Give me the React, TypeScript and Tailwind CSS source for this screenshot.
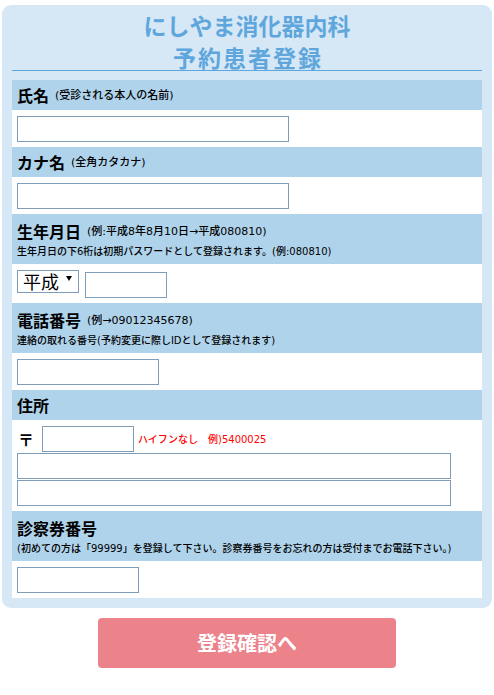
import React from "react";

const font = { fontFamily: '"Noto Sans CJK JP", "Noto Sans", sans-serif' };
const mixed = { fontFamily: '"DejaVu Sans", "Noto Sans CJK JP", sans-serif' };

function Input({ w, className = "" }: { w: string; className?: string }) {
  return (
    <div className={`h-[26px] border border-[#7f9db9] bg-white ${w} ${className}`} />
  );
}

function Note({ text }: { text: string }) {
  return (
    <span className="ml-[6px] text-[11px] leading-[16px] mt-[2px] font-medium text-black" style={mixed}>
      {text}
    </span>
  );
}

function Header1({ label, note }: { label: string; note?: string }) {
  return (
    <div className="h-[30px] bg-[#afd3eb] px-[5px] flex items-center text-black">
      <span className="text-[16px] font-bold leading-[20px]">{label}</span>
      {note && <Note text={note} />}
    </div>
  );
}

function Header2({ label, note, sub }: { label: string; note?: string; sub: string }) {
  return (
    <div className="h-[50px] bg-[#afd3eb] px-[5px] pt-[7px] text-black">
      <div className="flex items-center h-[20px]">
        <span className="text-[16px] font-bold leading-[20px]">{label}</span>
        {note && <Note text={note} />}
      </div>
      <div className="mt-[3px] text-[10px] leading-[16px] whitespace-nowrap font-medium" style={mixed}>
        {sub}
      </div>
    </div>
  );
}

export default function App() {
  return (
    <div className="w-[494px] h-[695px] bg-white" style={font}>
      <div className="mx-[2px] mt-[5px] w-[490px] bg-[#d6e8f6] rounded-[9px] px-[10px] pb-[10px]">
        <div className="h-[66px] pt-[4px] border-b border-[#5ea6dc] text-center text-[#5ea6dc] text-[23px] font-bold leading-[32px]">
          <div>にしやま消化器内科</div>
          <div className="tracking-[2px] pl-[2px]">予約患者登録</div>
        </div>
        <div className="mt-[9px] flex flex-col">
          <Header1 label="氏名" note="(受診される本人の名前)" />
          <div className="h-[37px] bg-white px-[5px] pt-[6px]">
            <Input w="w-[272px]" />
          </div>
          <Header1 label="カナ名" note="(全角カタカナ)" />
          <div className="h-[37px] bg-white px-[5px] pt-[6px]">
            <Input w="w-[272px]" />
          </div>
          <Header2
            label="生年月日"
            note="(例:平成8年8月10日→平成080810)"
            sub="生年月日の下6桁は初期パスワードとして登録されます。(例:080810)"
          />
          <div className="h-[39px] bg-white px-[5px] pt-[6px] flex items-start">
            <div className="h-[23px] w-[62px] border border-[#7f9db9] bg-white flex items-center pl-[5px] text-black">
              <span className="text-[18px] leading-[21px]">平成</span>
              <svg width="6" height="5" viewBox="0 0 6 5" className="ml-[7px] mt-[-6px]">
                <path d="M0 0H6L3 5Z" fill="#000" />
              </svg>
            </div>
            <Input w="w-[82px]" className="ml-[6px] mt-[2px]" />
          </div>
          <Header2
            label="電話番号"
            note="(例→09012345678)"
            sub="連絡の取れる番号(予約変更に際しIDとして登録されます)"
          />
          <div className="h-[37px] bg-white px-[5px] pt-[6px]">
            <Input w="w-[142px]" />
          </div>
          <Header1 label="住所" />
          <div className="h-[91px] bg-white px-[5px] pt-[6px] flex flex-col gap-[1px]">
            <div className="flex items-center">
              <span className="w-[25px] pl-[1px] text-[16px] font-bold leading-[20px] text-black">〒</span>
              <Input w="w-[92px]" />
              <span
                className="ml-[4px] text-[10px] leading-[16px] text-[#ff0000] mt-[2px] whitespace-pre font-medium"
                style={mixed}
              >
                ハイフンなし　例)5400025
              </span>
            </div>
            <Input w="w-[434px]" />
            <Input w="w-[434px]" />
          </div>
          <Header2
            label="診察券番号"
            sub="(初めての方は「99999」を登録して下さい。診察券番号をお忘れの方は受付までお電話下さい。)"
          />
          <div className="h-[37px] bg-white px-[5px] pt-[6px]">
            <Input w="w-[122px]" />
          </div>
        </div>
      </div>
      <div className="mt-[10px] flex justify-center">
        <div className="w-[298px] h-[50px] rounded-[4px] bg-[#ec828a] flex items-center justify-center text-white text-[20px] font-bold">
          登録確認へ
        </div>
      </div>
    </div>
  );
}
